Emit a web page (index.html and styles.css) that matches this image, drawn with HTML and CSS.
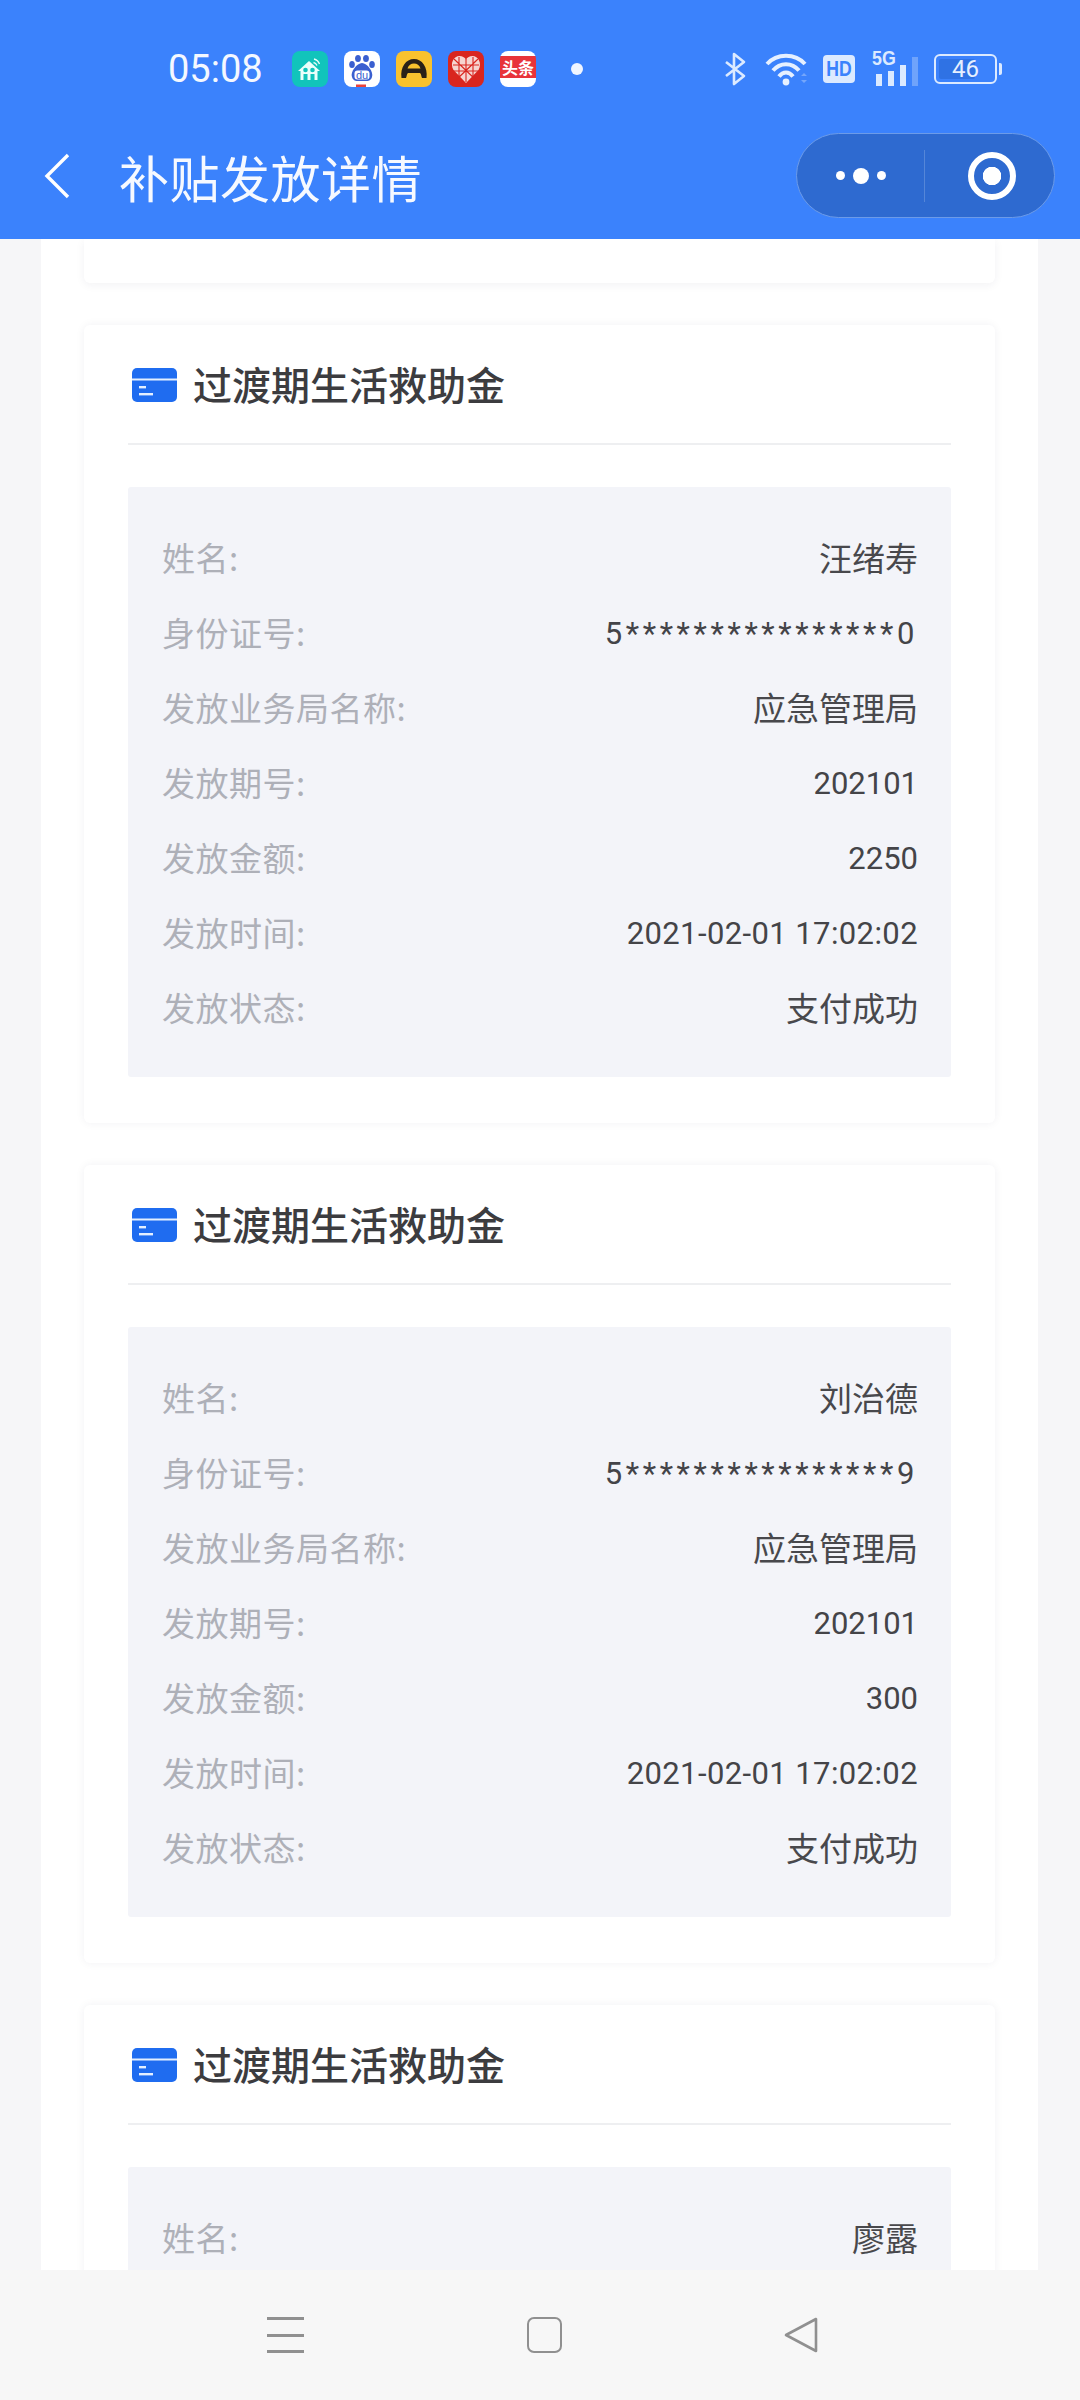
FILE: index.html
```html
<!DOCTYPE html>
<html lang="zh-CN">
<head>
    <meta charset="UTF-8">
    <meta name="viewport" content="width=device-width, initial-scale=1.0">
    <title>补贴发放详情</title>
    <link rel="stylesheet" href="styles.css">
</head>
<body>
    <svg class="defs" width="0" height="0">
        <symbol id="cardIcon" viewBox="0 0 45 34">
            <rect width="45" height="34" rx="5" fill="#1f6cf0"/>
            <rect y="10.5" width="45" height="2" fill="#e4efff"/>
            <rect x="7" y="18" width="7" height="2.4" fill="#e4efff"/>
            <rect x="7" y="25" width="14" height="2.4" fill="#e4efff"/>
        </symbol>
    </svg>

    <header class="topbar">
        <div class="status">
            <span class="clock">05:08</span>
            <div class="apps">
                <svg class="app" viewBox="0 0 36 36">
                    <rect width="36" height="36" rx="8" fill="#11c4bb"/>
                    <path d="M17 10 L28 20 L25.500 20 V29 H8.500 V20 L6 20 Z" fill="#eafffb"/>
                    <circle cx="13.500" cy="19" r="2.300" fill="#11c4bb"/>
                    <circle cx="20.500" cy="19" r="2.300" fill="#11c4bb"/>
                    <path d="M11.500 29 V23 H15.500 V29 Z M18.500 29 V23 H22.500 V29 Z" fill="#11c4bb"/>
                    <path d="M22 8 Q26 9 27.500 13 M21.500 11.500 Q24 12 25 14.500" fill="none" stroke="#eafffb" stroke-width="1.300"/>
                </svg>
                <svg class="app" viewBox="0 0 36 36">
                    <rect width="36" height="36" rx="8" fill="#fff"/>
                    <ellipse cx="8" cy="13.500" rx="2.800" ry="3.600" fill="#3a5fd0"/>
                    <ellipse cx="14" cy="7.500" rx="2.900" ry="3.600" fill="#3a5fd0"/>
                    <ellipse cx="22" cy="7.500" rx="2.900" ry="3.600" fill="#3a5fd0"/>
                    <ellipse cx="28" cy="13.500" rx="2.800" ry="3.600" fill="#3a5fd0"/>
                    <path d="M18 12 C23 12 30 21 28 26 C26.500 31 22 30 18 30 C14 30 9.500 31 8 26 C6 21 13 12 18 12 Z" fill="#3a5fd0"/>
                    <rect x="10.500" y="19.500" width="15" height="9" rx="3" fill="#fff"/>
                    <text class="du" x="18" y="27.500" text-anchor="middle">du</text>
                    <rect x="12" y="33.500" width="10" height="2.500" fill="#e8403c"/>
                </svg>
                <svg class="app" viewBox="0 0 36 36">
                    <rect width="36" height="36" rx="8" fill="#f9c22e"/>
                    <path d="M5.500 27 L10 27 C11 25 10.500 23 12 22 H24 C25.500 23 25 25 26 27 L30.500 27 C32 16 26 8 18 8 C10 8 4 16 5.500 27 Z M11.500 17.500 C12.500 14 15 12.500 18 12.500 C21 12.500 23.500 14 24.500 17.500 Z" fill="#2a2118" fill-rule="evenodd"/>
                </svg>
                <svg class="app" viewBox="0 0 36 36">
                    <rect width="36" height="36" rx="8" fill="#d9261f"/>
                    <path d="M18 32 L5.500 19 C1.500 12 6 5 11.500 5 C14.500 5 16.500 6.500 18 8.500 C19.500 6.500 21.500 5 24.500 5 C30 5 34.500 12 30.500 19 Z" fill="#f6d5d0"/>
                    <path d="M18 8 V31 M5 14 H31 M5 20 H31 M11 6 V25 M25 6 V25 M6 8 L28 29 M30 8 L8 29" stroke="#d9261f" stroke-width="1.100"/>
                </svg>
                <div class="toutiao">头条</div>
                <span class="more-dot"></span>
            </div>
            <div class="sys">
                <svg class="bt" viewBox="0 0 22 34">
                    <path d="M2 10 L20 24 L10 32 V2 L20 10 L2 24" fill="none" stroke="#dceaff" stroke-width="2.600" stroke-linejoin="round"/>
                </svg>
                <svg class="wifi" viewBox="0 0 42 34">
                    <path d="M2 12 C12 1 30 1 40 12 M8 18.500 C15 10 27 10 34 18.500 M14 24.500 C18 19 24 19 28 24.500" fill="none" stroke="#e6f0ff" stroke-width="4"/>
                    <circle cx="21" cy="30" r="3.400" fill="#e6f0ff"/>
                    <path d="M36 24 L39 21 L42 24 Z M36 28 L42 28 L39 31 Z" fill="#74a6fb"/>
                </svg>
                <div class="hd"><span>HD</span></div>
                <div class="signal">
                    <span class="fiveg">5G</span>
                    <i class="bar b1"></i>
                    <i class="bar b2"></i>
                    <i class="bar b3"></i>
                    <i class="bar b4"></i>
                </div>
                <div class="battery">
                    <span class="level"></span>
                    <span class="num">46</span>
                </div>
            </div>
        </div>
        <div class="nav">
            <svg class="back" viewBox="0 0 26 46">
                <path d="M24 2 L3 23 L24 44" fill="none" stroke="#fff" stroke-width="3.400"/>
            </svg>
            <h1>补贴发放详情</h1>
            <div class="capsule">
                <div class="cap-more">
                    <i class="d"></i><i class="d big"></i><i class="d"></i>
                </div>
                <div class="cap-close"><span class="ring"></span></div>
            </div>
        </div>
    </header>

    <main class="content">
        <div class="panel">
            <div class="card-stub"></div>

            <section class="card">
                <div class="card-head">
                    <svg class="card-icon"><use href="#cardIcon"/></svg>
                    <h2>过渡期生活救助金</h2>
                </div>
                <dl class="info">
                    <div class="row"><dt>姓名:</dt><dd>汪绪寿</dd></div>
                    <div class="row"><dt>身份证号:</dt><dd class="digits masked">5****************0</dd></div>
                    <div class="row"><dt>发放业务局名称:</dt><dd>应急管理局</dd></div>
                    <div class="row"><dt>发放期号:</dt><dd class="digits">202101</dd></div>
                    <div class="row"><dt>发放金额:</dt><dd class="digits">2250</dd></div>
                    <div class="row"><dt>发放时间:</dt><dd class="digits stamp">2021-02-01 17:02:02</dd></div>
                    <div class="row"><dt>发放状态:</dt><dd>支付成功</dd></div>
                </dl>
            </section>

            <section class="card">
                <div class="card-head">
                    <svg class="card-icon"><use href="#cardIcon"/></svg>
                    <h2>过渡期生活救助金</h2>
                </div>
                <dl class="info">
                    <div class="row"><dt>姓名:</dt><dd>刘治德</dd></div>
                    <div class="row"><dt>身份证号:</dt><dd class="digits masked">5****************9</dd></div>
                    <div class="row"><dt>发放业务局名称:</dt><dd>应急管理局</dd></div>
                    <div class="row"><dt>发放期号:</dt><dd class="digits">202101</dd></div>
                    <div class="row"><dt>发放金额:</dt><dd class="digits">300</dd></div>
                    <div class="row"><dt>发放时间:</dt><dd class="digits stamp">2021-02-01 17:02:02</dd></div>
                    <div class="row"><dt>发放状态:</dt><dd>支付成功</dd></div>
                </dl>
            </section>

            <section class="card">
                <div class="card-head">
                    <svg class="card-icon"><use href="#cardIcon"/></svg>
                    <h2>过渡期生活救助金</h2>
                </div>
                <dl class="info">
                    <div class="row"><dt>姓名:</dt><dd>廖露</dd></div>
                </dl>
            </section>
        </div>
    </main>

    <footer class="sysnav">
        <div class="menu"><i></i><i></i><i></i></div>
        <div class="home"></div>
        <svg class="tri" viewBox="0 0 34 36">
            <path d="M32 2 V34 L2 18 Z" fill="none" stroke="#909090" stroke-width="2.600" stroke-linejoin="round"/>
        </svg>
    </footer>
</body>
</html>
```

FILE: styles.css
```css
* {
    box-sizing: border-box;
}
body {
    margin: 0;
    width: 1080px;
    height: 2400px;
    display: flex;
    flex-direction: column;
    overflow: hidden;
    background: #f6f6f8;
    font-family: "Noto Sans CJK SC", "Noto Sans", sans-serif;
}
.defs {
    position: absolute;
}

/* top bar */
.topbar {
    height: 239px;
    flex: none;
    background: #3b82fc;
    color: #fff;
}
.status {
    height: 112px;
    padding: 26px 83px 0 168px;
    display: flex;
    align-items: center;
}
.clock {
    width: 124px;
    font-family: Roboto, sans-serif;
    font-size: 38px;
    color: #f4f8ff;
}
.apps {
    display: flex;
    align-items: center;
    gap: 16px;
}
.app {
    width: 36px;
    height: 36px;
}
.du {
    font-family: "Liberation Sans", sans-serif;
    font-size: 11px;
    fill: #3a5fd0;
}
.toutiao {
    width: 36px;
    height: 36px;
    border-radius: 8px;
    background: linear-gradient(#fff 0 5px, #e8343a 5px 27px, #fff 27px);
    color: #fff;
    font-size: 16px;
    font-weight: 700;
    line-height: 32px;
    text-align: center;
    white-space: nowrap;
}
.more-dot {
    width: 12px;
    height: 12px;
    margin-left: 19px;
    border-radius: 50%;
    background: #f0f5ff;
}
.sys {
    margin-left: auto;
    display: flex;
    align-items: center;
}
.bt {
    width: 22px;
    height: 34px;
    margin-right: 19px;
}
.wifi {
    width: 42px;
    height: 34px;
    margin-right: 16px;
}
.hd {
    width: 32px;
    height: 28px;
    margin-right: 17px;
    border-radius: 4px;
    background: #dceaff;
    color: #3b82fc;
    font-family: "Liberation Sans", sans-serif;
    font-size: 22px;
    font-weight: 700;
    line-height: 28px;
    text-align: center;
}
.hd span {
    display: inline-block;
    transform: scaleX(.8);
    margin: 0 -4px;
}
.signal {
    position: relative;
    width: 46px;
    height: 34px;
    margin-right: 16px;
    display: flex;
    align-items: flex-end;
    justify-content: flex-end;
    gap: 5.500px;
}
.fiveg {
    position: absolute;
    left: 0;
    top: -6px;
    font-family: "Liberation Sans", sans-serif;
    font-size: 21px;
    font-weight: 700;
    color: #dceaff;
    transform: scaleX(.85);
    transform-origin: left;
}
.bar {
    width: 6.500px;
    background: #dceaff;
}
.b1 {
    height: 12px;
}
.b2 {
    height: 15px;
}
.b3 {
    height: 21px;
}
.b4 {
    height: 29px;
    background: #6fa3fb;
}
.battery {
    position: relative;
    width: 63px;
    height: 30px;
    border: 2px solid #dceaff;
    border-radius: 6px;
    font-family: Roboto, sans-serif;
    font-size: 24px;
    line-height: 26px;
    text-align: center;
    color: #e6f0ff;
}
.battery::after {
    content: "";
    position: absolute;
    right: -7px;
    top: 7px;
    width: 3px;
    height: 12px;
    border-radius: 0 2px 2px 0;
    background: #dceaff;
}
.level {
    position: absolute;
    left: 3px;
    top: 3px;
    bottom: 3px;
    width: 36px;
    border-radius: 2px;
    background: #2f72e4;
}
.num {
    position: relative;
}
.nav {
    height: 127px;
    padding: 0 25px 0 44px;
    display: flex;
    align-items: center;
}
.back {
    width: 26px;
    height: 46px;
}
h1 {
    margin: 0 0 0 49px;
    font-size: 50px;
    font-weight: 400;
    letter-spacing: .5px;
    color: #f6f9ff;
}
.capsule {
    margin-left: auto;
    width: 259px;
    height: 85px;
    display: flex;
    align-items: center;
    border: 1.500px solid #6c9be8;
    border-radius: 43px;
    background: #2e6ad0;
}
.cap-more {
    width: 128px;
    height: 52px;
    display: flex;
    align-items: center;
    justify-content: center;
    gap: 8px;
    border-right: 1px solid #5586d8;
}
.d {
    width: 9px;
    height: 9px;
    border-radius: 50%;
    background: #fff;
}
.d.big {
    width: 16px;
    height: 16px;
}
.cap-close {
    flex: 1;
    display: flex;
    justify-content: center;
    padding-left: 5px;
}
.ring {
    width: 48px;
    height: 48px;
    border: 6px solid #fff;
    border-radius: 50%;
    background: radial-gradient(circle, #fff 0 9px, transparent 9.500px);
}

/* list */
.content {
    flex: 1;
    min-height: 0;
    overflow: hidden;
}
.panel {
    width: 997px;
    margin-left: 41px;
    padding: 0 43px;
    display: flex;
    flex-direction: column;
    gap: 42px;
    background: #fff;
}
.card-stub {
    height: 44px;
    background: #fff;
    border-radius: 0 0 6px 6px;
    box-shadow: 0 2px 10px rgba(30, 40, 70, .06);
}
.card {
    padding: 0 44px 46px;
    border-radius: 6px;
    background: #fff;
    box-shadow: 0 0 10px rgba(30, 40, 70, .06);
}
.card-head {
    height: 120px;
    padding: 0 0 2px 4px;
    display: flex;
    align-items: center;
    gap: 16px;
    border-bottom: 2px solid #eeeff1;
}
.card-icon {
    width: 45px;
    height: 34px;
    margin-top: 4px;
}
h2 {
    margin: 0;
    font-size: 39px;
    font-weight: 500;
    color: #3c3c3f;
}
.info {
    margin: 42px 0 0;
    padding: 32px 33px 33px 34px;
    background: #f3f4f9;
    border-radius: 3px;
}
.row {
    height: 75px;
    display: flex;
    align-items: center;
    justify-content: space-between;
    font-size: 33px;
}
dt {
    letter-spacing: .5px;
    color: #aeb0b8;
}
dd {
    margin: 0;
    color: #48484c;
}
.digits {
    padding-top: 3px;
    font-family: Roboto, sans-serif;
    font-size: 31px;
    color: #444448;
}
.stamp {
    letter-spacing: .4px;
}
.masked {
    letter-spacing: 3.600px;
}

/* android nav */
.sysnav {
    position: relative;
    height: 130px;
    flex: none;
    padding: 0 262px 0 267px;
    display: flex;
    align-items: center;
    justify-content: space-between;
    background: #f7f7f7;
}
.menu {
    width: 37px;
    height: 36px;
    display: flex;
    flex-direction: column;
    justify-content: space-between;
}
.menu i {
    height: 3px;
    background: #909090;
}
.home {
    width: 35px;
    height: 36px;
    border: 2.500px solid #909090;
    border-radius: 7px;
}
.tri {
    width: 34px;
    height: 36px;
}
```
